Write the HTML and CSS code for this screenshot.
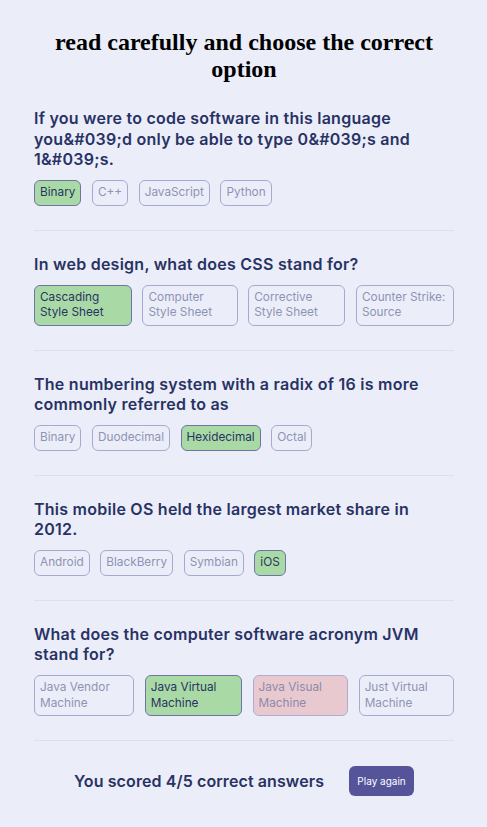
FILE: index.html
```html
<!DOCTYPE html>
<html>
<head>
<meta charset="utf-8">
<link rel="stylesheet" href="styles.css">
</head>
<body>
<main class="quiz">
  <h1 class="title">read carefully and choose the correct option</h1>

  <section class="question">
    <h2 class="q-text">If you were to code software in this language you&amp;#039;d only be able to type 0&amp;#039;s and 1&amp;#039;s.</h2>
    <div class="answers">
      <button class="answer correct">Binary</button>
      <button class="answer">C++</button>
      <button class="answer">JavaScript</button>
      <button class="answer">Python</button>
    </div>
  </section>

  <section class="question">
    <h2 class="q-text">In web design, what does CSS stand for?</h2>
    <div class="answers">
      <button class="answer correct">Cascading Style Sheet</button>
      <button class="answer">Computer Style Sheet</button>
      <button class="answer">Corrective Style Sheet</button>
      <button class="answer">Counter Strike: Source</button>
    </div>
  </section>

  <section class="question">
    <h2 class="q-text">The numbering system with a radix of 16 is more commonly referred to as</h2>
    <div class="answers">
      <button class="answer">Binary</button>
      <button class="answer">Duodecimal</button>
      <button class="answer correct">Hexidecimal</button>
      <button class="answer">Octal</button>
    </div>
  </section>

  <section class="question">
    <h2 class="q-text">This mobile OS held the largest market share in 2012.</h2>
    <div class="answers">
      <button class="answer">Android</button>
      <button class="answer">BlackBerry</button>
      <button class="answer">Symbian</button>
      <button class="answer correct">iOS</button>
    </div>
  </section>

  <section class="question">
    <h2 class="q-text">What does the computer software acronym JVM stand for?</h2>
    <div class="answers">
      <button class="answer">Java Vendor Machine</button>
      <button class="answer correct">Java Virtual Machine</button>
      <button class="answer wrong">Java Visual Machine</button>
      <button class="answer">Just Virtual Machine</button>
    </div>
  </section>

  <footer class="score-row">
    <p class="score">You scored 4/5 correct answers</p>
    <button class="play-btn">Play again</button>
  </footer>
</main>
</body>
</html>
```

FILE: styles.css
```css
html, body {
  margin: 0;
  padding: 0;
  background: #ebeef8;
}

.quiz {
  width: 420px;
  margin: 0 auto;
  padding-left: 1px;
}

.title {
  font-family: "Liberation Serif", serif;
  font-weight: 700;
  font-size: 24px;
  line-height: 27px;
  text-align: center;
  color: #000;
  margin: 29px 0 2px;
  padding: 0;
}

.question {
  padding: 23px 0 24px;
  border-bottom: 1px solid #dcdff0;
}

.q-text {
  font-family: "Inter", sans-serif;
  font-weight: 600;
  font-size: 16px;
  letter-spacing: 0.25px;
  line-height: 20.5px;
  color: #293264;
  margin: 0 0 10.5px;
}

.answers {
  display: flex;
  gap: 10.5px;
}

.answer {
  font-family: "Inter", sans-serif;
  font-size: 11.8px;
  line-height: 15.5px;
  text-align: left;
  color: #8f93b6;
  background: transparent;
  border: 1px solid #a8a9d3;
  border-radius: 6px;
  padding: 4px 5px;
  margin: 0;
}

.answer.correct {
  background: #a9daa5;
  border-color: #6f74a9;
  color: #293264;
}

.answer.wrong {
  background: #e8c9d0;
  border-color: #b0abd2;
  color: #8e8bab;
}

.score-row {
  display: flex;
  justify-content: center;
  align-items: center;
  gap: 25px;
  padding: 25px 0 30px;
}

.score {
  font-family: "Inter", sans-serif;
  font-weight: 600;
  font-size: 16px;
  letter-spacing: 0.1px;
  color: #293264;
  margin: 0;
}

.play-btn {
  font-family: "Inter", sans-serif;
  font-size: 10px;
  color: #fff;
  background: #55549a;
  border: none;
  border-radius: 6px;
  width: 65px;
  height: 30px;
  padding: 0;
}
```
